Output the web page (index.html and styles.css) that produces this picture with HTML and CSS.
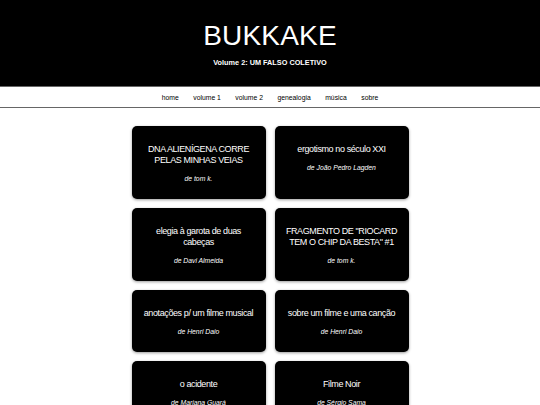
FILE: index.html
```html
<!DOCTYPE html>
<html lang="pt">
<head>
<meta charset="utf-8">
<title>BUKKAKE</title>
<link rel="stylesheet" href="styles.css">
</head>
<body>
<header class="site-header">
  <h1 class="site-title">BUKKAKE</h1>
  <p class="site-subtitle">Volume 2: UM FALSO COLETIVO</p>
</header>
<nav class="site-nav">
  <a href="#">home</a>
  <a href="#">volume 1</a>
  <a href="#">volume 2</a>
  <a href="#">genealogia</a>
  <a href="#">música</a>
  <a href="#">sobre</a>
</nav>
<main class="cards">
  <article class="card"><h3 class="card-title">DNA ALIENÍGENA CORRE PELAS MINHAS VEIAS</h3><p class="card-author">de tom k.</p></article>
  <article class="card"><h3 class="card-title">ergotismo no século XXI</h3><p class="card-author">de João Pedro Lagden</p></article>
  <article class="card"><h3 class="card-title">elegia à garota de duas cabeças</h3><p class="card-author">de Davi Almeida</p></article>
  <article class="card"><h3 class="card-title">FRAGMENTO DE "RIOCARD TEM O CHIP DA BESTA" #1</h3><p class="card-author">de tom k.</p></article>
  <article class="card"><h3 class="card-title">anotações p/ um filme musical</h3><p class="card-author">de Henri Daio</p></article>
  <article class="card"><h3 class="card-title">sobre um filme e uma canção</h3><p class="card-author">de Henri Daio</p></article>
  <article class="card"><h3 class="card-title">o acidente</h3><p class="card-author">de Mariana Guará</p></article>
  <article class="card"><h3 class="card-title">Filme Noir</h3><p class="card-author">de Sérgio Sama</p></article>
</main>
</body>
</html>
```
FILE: styles.css
```css
html, body {
  margin: 0;
  padding: 0;
  background: #ffffff;
  font-family: "Liberation Sans", Arial, sans-serif;
  color: #000;
}

.site-header {
  background: #000;
  color: #fff;
  text-align: center;
  padding: 20px 0 18px;
  height: 48px;
}

.site-title {
  margin: 0;
  font-size: 28px;
  line-height: 32px;
  font-weight: normal;
  letter-spacing: 0.2px;
}

.site-subtitle {
  margin: 6px 0 0;
  font-size: 7.3px;
  line-height: 9px;
  font-weight: bold;
}

.site-nav {
  display: flex;
  justify-content: center;
  align-items: center;
  gap: 14.5px;
  height: 20px;
  border-top: 1px solid #666;
  border-bottom: 1px solid #666;
  background: #fff;
}

.site-nav a {
  color: #000;
  text-decoration: none;
  font-size: 6.8px;
  line-height: 9px;
}

.cards {
  display: grid;
  grid-template-columns: 134px 134px;
  gap: 9px;
  justify-content: center;
  margin: 18px 0 0;
  padding-bottom: 20px;
}

.card {
  background: #000;
  color: #fff;
  border-radius: 5px;
  box-shadow: 0 1px 3px rgba(0, 0, 0, 0.4);
  padding: 18px 11px 16px;
  text-align: center;
}

.card-title {
  margin: 0 0 9px;
  font-size: 9px;
  line-height: 11px;
  font-weight: normal;
  letter-spacing: -0.4px;
}

.card-author {
  margin: 0;
  font-size: 6.8px;
  line-height: 8px;
  font-style: italic;
}
```
